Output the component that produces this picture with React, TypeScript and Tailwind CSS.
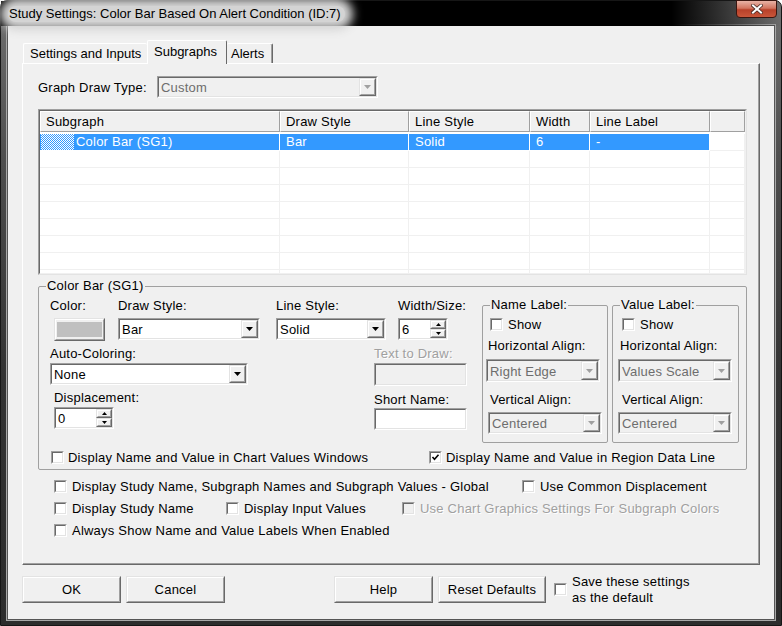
import React from 'react';

// Classic Windows 3D borders
const Sunken: React.FC<{ className?: string; inner?: string; children?: React.ReactNode }> = ({ className = '', inner = 'bg-white', children }) => (
  <div className={`flex border border-t-[#a0a0a0] border-l-[#a0a0a0] border-r-white border-b-white ${className}`}>
    <div className={`flex min-w-0 flex-1 border border-t-[#696969] border-l-[#696969] border-r-[#e3e3e3] border-b-[#e3e3e3] ${inner}`}>{children}</div>
  </div>
);

const Raised: React.FC<{ className?: string; children?: React.ReactNode }> = ({ className = '', children }) => (
  <div className={`flex border border-t-[#e3e3e3] border-l-[#e3e3e3] border-r-[#696969] border-b-[#696969] ${className}`}>
    <div className="flex flex-1 items-center justify-center border border-t-white border-l-white border-r-[#a0a0a0] border-b-[#a0a0a0] bg-[#f0f0f0]">{children}</div>
  </div>
);

const Tri: React.FC<{ up?: boolean; small?: boolean; color?: string }> = ({ up = false, small = false, color = '#000' }) => {
  const w = small ? 5 : 7;
  const h = small ? 3 : 4;
  const pts = up ? `0,${h} ${w},${h} ${w / 2},0` : `0,0 ${w},0 ${w / 2},${h}`;
  return (
    <svg width={w} height={h} viewBox={`0 0 ${w} ${h}`} className="block">
      <polygon points={pts} fill={color} />
    </svg>
  );
};

const Combo: React.FC<{ className: string; value: string; disabled?: boolean }> = ({ className, value, disabled = false }) => (
  <Sunken className={className} inner={disabled ? 'bg-[#f0f0f0]' : 'bg-white'}>
    <span className={`relative top-[1px] flex-1 self-center pl-[2px] leading-[16px] ${disabled ? 'text-[#6d6d6d]' : 'text-black'}`}>{value}</span>
    <Raised className="w-[17px]">
      <Tri color={disabled ? '#a0a0a0' : '#000'} />
    </Raised>
  </Sunken>
);

const Spin: React.FC<{ className: string; value: string }> = ({ className, value }) => (
  <Sunken className={className}>
    <span className="relative top-[1px] flex-1 self-center pl-[2px] leading-[16px]">{value}</span>
    <div className="flex w-[16px] flex-col">
      <Raised className="flex-1">
        <Tri up small />
      </Raised>
      <Raised className="flex-1">
        <Tri small />
      </Raised>
    </div>
  </Sunken>
);

const Check: React.FC<{ checked?: boolean; disabled?: boolean }> = ({ checked = false, disabled = false }) => (
  <Sunken className="h-[13px] w-[13px] shrink-0" inner={disabled ? 'bg-[#f0f0f0]' : 'bg-white'}>
    {checked && (
      <svg width="9" height="9" viewBox="0 0 9 9" className="block">
        <path d="M1.5 4 L3.5 6.2 L7.5 1.8" stroke="#000" strokeWidth="1.6" fill="none" />
      </svg>
    )}
  </Sunken>
);

const L: React.FC<{ children: React.ReactNode; gray?: boolean; className?: string }> = ({ children, gray = false, className = '' }) => (
  <div className={`h-[16px] whitespace-nowrap leading-[18px] ${gray ? 'text-[#a0a0a0] [text-shadow:1px_1px_0_#fff]' : ''} ${className}`}>{children}</div>
);

const Btn: React.FC<{ className: string; children: React.ReactNode }> = ({ className, children }) => (
  <Raised className={className}>
    <span className="leading-[16px]">{children}</span>
  </Raised>
);

const cols = [
  { w: 'w-[240px]', head: 'Subgraph' },
  { w: 'w-[129px]', head: 'Draw Style' },
  { w: 'w-[121px]', head: 'Line Style' },
  { w: 'w-[60px]', head: 'Width' },
  { w: 'w-[120px]', head: 'Line Label' },
  { w: 'flex-1', head: '' },
];

const rowValues = ['Color Bar (SG1)', 'Bar', 'Solid', '6', '-', ''];

const SubgraphTable: React.FC = () => (
  <div className="mt-[11px] h-[166px] w-[709px] border border-t-[#a0a0a0] border-l-[#a0a0a0] border-r-[#e3e3e3] border-b-[#e3e3e3]">
    <div className="h-full overflow-hidden border border-t-[#696969] border-l-[#696969] border-r-[#f0f0f0] border-b-[#f0f0f0] bg-white">
      <div className="flex h-[21px]">
        {cols.map((c, i) => (
          <div
            key={i}
            className={`${c.w} border border-t-white border-l-white border-r-[#a0a0a0] border-b-[#a0a0a0] bg-[#f0f0f0] pl-[5px] leading-[20px]`}
          >
            {c.head}
          </div>
        ))}
      </div>
      <div className="pt-[2px]">
        {Array.from({ length: 9 }).map((_, r) => (
          <div key={r} className="flex h-[17px]">
            {cols.map((c, i) => {
              const sel = r === 0 && i < 5;
              return (
                <div
                  key={i}
                  className={`${c.w} flex border-b border-r ${sel ? 'border-white bg-[#3399ff] text-white' : 'border-[#f0f0f0]'} ${i === 0 ? 'pl-[1px]' : 'pl-[6px]'} leading-[16px]`}
                >
                  {r === 0 && i === 0 && (
                    <span className="mr-[2px] h-full w-[33px] bg-[repeating-conic-gradient(#3399ff_0%_25%,#ffffff_0%_50%)] bg-[length:2px_2px]" />
                  )}
                  {r === 0 ? rowValues[i] : ''}
                </div>
              );
            })}
          </div>
        ))}
      </div>
    </div>
  </div>
);

const LabelGroup: React.FC<{ title: string; hAlign: string; className: string; pad: { show: string; h: string; combo: string; v: string } }> = ({ title, hAlign, className, pad }) => (
  <fieldset className={`rounded-[2px] border border-[#a0a0a0] pb-[8px] ${className}`}>
    <legend className="ml-[7px] px-[1px] leading-[16px]">{title}</legend>
    <div className={`mt-[4px] flex h-[14px] items-center ${pad.show}`}>
      <Check />
      <span className="relative top-[1px] ml-[5px] leading-[16px]">Show</span>
    </div>
    <L className={`mt-[6px] ${pad.h}`}>Horizontal Align:</L>
    <Combo className={`mt-[6px] h-[23px] w-[114px] ${pad.combo}`} value={hAlign} disabled />
    <L className={`mt-[9px] ${pad.v}`}>Vertical Align:</L>
    <Combo className="mt-[5px] ml-[5px] h-[22px] w-[114px]" value="Centered" disabled />
  </fieldset>
);

const CheckItem: React.FC<{ label: string; checked?: boolean; disabled?: boolean; className?: string; gap?: string }> = ({ label, checked, disabled, className = '', gap = 'ml-[5px]' }) => (
  <div className={`flex h-[16px] items-center ${className}`}>
    <Check checked={checked} disabled={disabled} />
    <span className={`${gap} relative top-[1px] whitespace-nowrap leading-[16px] ${disabled ? 'text-[#a0a0a0] [text-shadow:1px_1px_0_#fff]' : ''}`}>{label}</span>
  </div>
);

export default function App() {
  return (
    <div className="h-[626px] w-[782px] overflow-hidden font-['Liberation_Sans',Arial,sans-serif] text-[13px] tracking-[0.22px] text-black">
      <div className="flex h-full flex-col rounded-t-[7px] border border-[#161616] bg-[linear-gradient(180deg,#707070_0%,#4e4e4e_25%,#333333_60%,#2c2c2c_100%)] px-[7px] pb-[6px]">
        {/* title bar */}
        <div className="relative -mx-[7px] flex h-[25px] items-center bg-[linear-gradient(90deg,#000_0%,#000_86%,rgba(0,0,0,0)_100%)] pl-[7px]">
          <span className="rounded-[10px] bg-[#d4d4d4] pr-[4px] pl-[1px] text-[13px] leading-[16px] tracking-normal shadow-[0_0_10px_8px_#d4d4d4]">
            Study Settings: Color Bar Based On Alert Condition (ID:7)
          </span>
          <div className="absolute top-[-1px] right-[4px] flex h-[18px] w-[41px] items-center justify-center rounded-b-[4px] border border-[#3a1610] bg-[linear-gradient(180deg,#e8b3a6_0%,#d27560_45%,#b8412a_55%,#c9563a_100%)]">
            <svg width="12" height="10" viewBox="0 0 12 10">
              <path d="M2 1.5 L10 8.5 M10 1.5 L2 8.5" stroke="#4a2a24" strokeWidth="3.6" strokeLinecap="square" />
              <path d="M2 1.5 L10 8.5 M10 1.5 L2 8.5" stroke="#fff" strokeWidth="2" strokeLinecap="square" />
            </svg>
          </div>
        </div>

        {/* client */}
        <div className="flex flex-1 flex-col bg-[#f0f0f0] px-[14px] pt-[14px] shadow-[0_0_0_1px_#555,0_0_0_2px_#a8a8a8]">
          {/* tabs */}
          <div className="flex h-[23px] items-end pl-[1px] tracking-normal">
            <div className="h-[20px] w-[124px] rounded-t-[2px] border-t border-l border-white pl-[6px] leading-[20px]">Settings and Inputs</div>
            <div className="relative z-10 -mb-[1px] h-[24px] w-[80px] rounded-t-[2px] border-t border-l border-r border-t-white border-l-white border-r-[#696969] bg-[#f0f0f0] pl-[6px] leading-[22px]">
              Subgraphs
            </div>
            <div className="h-[20px] w-[46px] rounded-t-[2px] border-t border-r border-t-white border-r-[#696969] pl-[4px] leading-[20px] shadow-[inset_-1px_0_0_#a0a0a0]">Alerts</div>
          </div>

          {/* tab panel */}
          <div className="flex h-[502px] flex-col border border-t-white border-l-white border-r-[#696969] border-b-[#696969]">
            <div className="flex flex-1 flex-col border-r border-b border-[#a0a0a0] pl-[15px]">
              <div className="mt-[12px] flex h-[22px] items-center">
                <span className="relative top-[1px] w-[119px] leading-[16px]">Graph Draw Type:</span>
                <Combo className="h-[22px] w-[221px]" value="Custom" disabled />
              </div>

              <SubgraphTable />

              {/* Color Bar group */}
              <fieldset className="mt-[3px] w-[709px] rounded-[2px] border border-[#a0a0a0] pb-[4px]">
                <legend className="ml-[7px] px-[1px] leading-[16px]">Color Bar (SG1)</legend>
                <div className="flex pt-[3px]">
                  <div className="flex w-[443px] flex-col">
                    <div className="flex pl-[11px]">
                      <div className="w-[68px]">
                        <L>Color:</L>
                        <Raised className="mt-[5px] ml-[4px] h-[23px] w-[51px]">
                          <span className="h-[15px] w-[45px] bg-[#c0c0c0]" />
                        </Raised>
                      </div>
                      <div className="w-[158px]">
                        <L>Draw Style:</L>
                        <Combo className="mt-[5px] h-[22px] w-[142px]" value="Bar" />
                      </div>
                      <div className="w-[122px]">
                        <L>Line Style:</L>
                        <Combo className="mt-[5px] h-[22px] w-[110px]" value="Solid" />
                      </div>
                      <div>
                        <L>Width/Size:</L>
                        <Spin className="mt-[5px] h-[22px] w-[50px]" value="6" />
                      </div>
                    </div>
                    <div className="mt-[4px] flex pl-[11px]">
                      <div className="w-[324px]">
                        <L>Auto-Coloring:</L>
                        <Combo className="mt-[2px] h-[22px] w-[198px]" value="None" />
                      </div>
                      <div>
                        <L gray>Text to Draw:</L>
                        <Sunken className="mt-[2px] h-[23px] w-[93px]" inner="bg-[#f0f0f0]" />
                      </div>
                    </div>
                    <div className="mt-[3px] flex pl-[15px]">
                      <div className="w-[320px]">
                        <L>Displacement:</L>
                        <Spin className="mt-[2px] h-[22px] w-[60px]" value="0" />
                      </div>
                      <div className="pt-[2px]">
                        <L>Short Name:</L>
                        <Sunken className="mt-[1px] h-[22px] w-[93px]" />
                      </div>
                    </div>
                  </div>
                  <LabelGroup
                    title="Name Label:"
                    hAlign="Right Edge"
                    className="w-[126px]"
                    pad={{ show: 'pl-[7px]', h: 'pl-[5px]', combo: 'ml-[3px]', v: 'pl-[7px]' }}
                  />
                  <LabelGroup
                    title="Value Label:"
                    hAlign="Values Scale"
                    className="ml-[4px] w-[127px]"
                    pad={{ show: 'pl-[9px]', h: 'pl-[7px]', combo: 'ml-[5px]', v: 'pl-[9px]' }}
                  />
                </div>
                <div className="mt-[6px] flex pl-[12px]">
                  <CheckItem className="w-[378px]" gap="ml-[4px]" label="Display Name and Value in Chart Values Windows" />
                  <CheckItem checked gap="ml-[4px]" label="Display Name and Value in Region Data Line" />
                </div>
              </fieldset>

              <div className="mt-[8px] flex pl-[16px]">
                <CheckItem className="w-[468px]" label="Display Study Name, Subgraph Names and Subgraph Values - Global" />
                <CheckItem label="Use Common Displacement" />
              </div>
              <div className="mt-[6px] flex pl-[16px]">
                <CheckItem className="w-[172px]" label="Display Study Name" />
                <CheckItem className="w-[176px]" label="Display Input Values" />
                <CheckItem disabled label="Use Chart Graphics Settings For Subgraph Colors" />
              </div>
              <div className="mt-[6px] flex pl-[16px]">
                <CheckItem label="Always Show Name and Value Labels When Enabled" />
              </div>
            </div>
          </div>

          {/* buttons */}
          <div className="mt-[11px] flex h-[27px] items-center">
            <Btn className="h-[27px] w-[99px]">OK</Btn>
            <Btn className="ml-[5px] h-[27px] w-[99px]">Cancel</Btn>
            <Btn className="ml-[109px] h-[27px] w-[99px]">Help</Btn>
            <Btn className="ml-[5px] h-[27px] w-[108px]">Reset Defaults</Btn>
            <div className="ml-[8px] flex items-center">
              <Check />
              <div className="ml-[5px] leading-[16px]">
                Save these settings
                <br />
                as the default
              </div>
            </div>
          </div>
        </div>
      </div>
    </div>
  );
}
